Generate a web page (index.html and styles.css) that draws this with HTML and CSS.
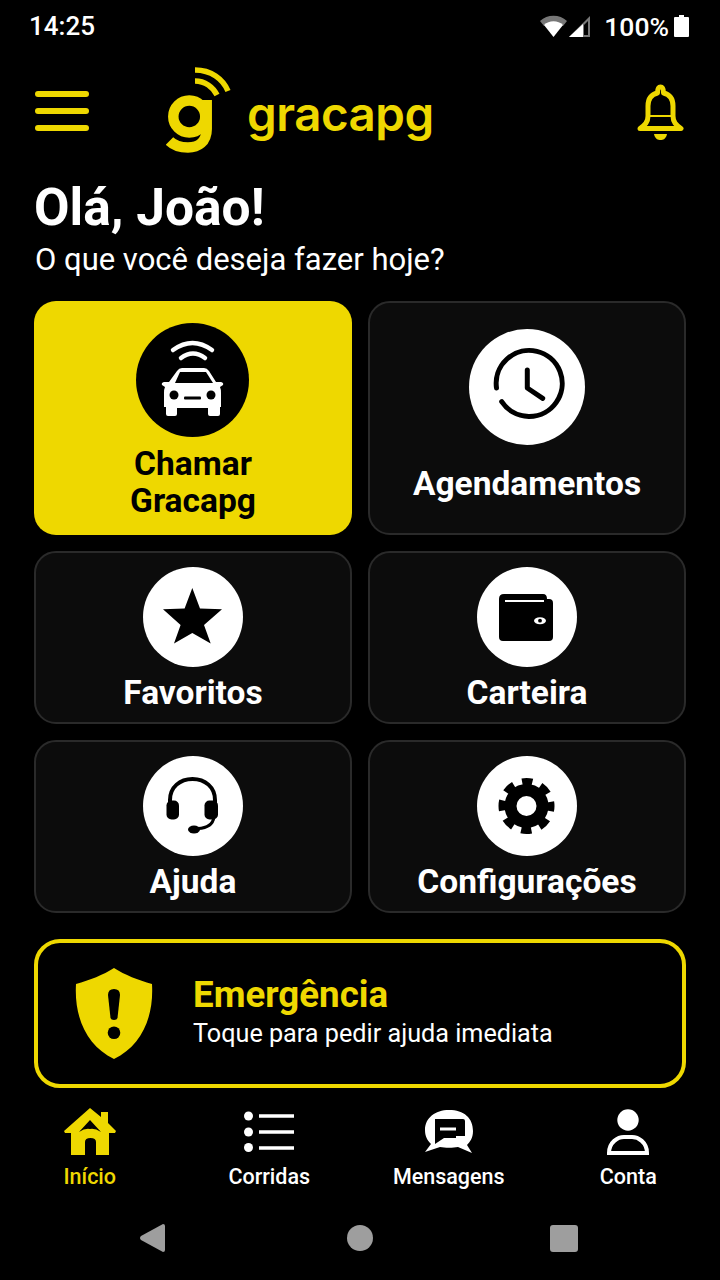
FILE: index.html
```html
<!DOCTYPE html>
<html lang="pt-BR">
<head>
    <meta charset="UTF-8">
    <meta name="viewport" content="width=device-width, initial-scale=1.0">
    <title>Gracapg</title>
    <link rel="stylesheet" href="styles.css">
</head>
<body>
    <div class="statusbar">
        <span class="time">14:25</span>
        <div class="status-icons">
            <svg class="ico-wifi" width="27" height="22" viewBox="0 0 27 22">
                <path class="grey" d="M0 6 A20 20 0 0 1 27 6 L23 11 A14 14 0 0 0 4 11 Z"/>
                <path class="white" d="M4 10 A14 14 0 0 1 23 10 L13.5 22 Z"/>
            </svg>
            <svg class="ico-signal" width="22" height="22" viewBox="0 0 22 22">
                <path class="grey" d="M21 1 V22 H0 Z"/>
                <path class="black" d="M19 6 V20 H15 V10 Z"/>
                <path class="white" d="M14 9 V22 H0 Z"/>
            </svg>
            <span class="pct">100%</span>
            <svg class="ico-batt" width="15" height="22" viewBox="0 0 15 22">
                <path class="white" d="M5 0 H10 V2 H14 Q15 2 15 3 V21 Q15 22 14 22 H1 Q0 22 0 21 V3 Q0 2 1 2 H5 Z"/>
            </svg>
        </div>
    </div>

    <header class="topbar">
        <div class="burger"><span></span><span></span><span></span></div>
        <div class="logo">
            <svg class="logo-mark" width="65" height="87" viewBox="0 0 65 87">
                <circle class="ln-y" cx="23.3" cy="49.5" r="16" stroke-width="10.5"/>
                <path class="ln-y" stroke-width="10.5" d="M40.7 33 V62 C40.7 75 32 80.500 22 80.500 C14 80.500 8 78.500 3.500 74"/>
                <path class="ln-y" stroke-width="5.5" d="M29 3 C45 3 57 12 62 24"/>
                <path class="ln-y" stroke-width="5.5" d="M29 14 C39 14 47 20 51 28"/>
            </svg>
            <span class="logo-text">gracapg</span>
        </div>
        <svg class="bell" width="47" height="56" viewBox="0 0 47 56">
            <path class="ln-y" stroke-width="5" stroke-linejoin="round" d="M23.5 3 C26 3 26.5 5 26.5 9 C33 10.500 36 15 36 22 V32 C36 38 39 41 44 44.500 H3 C8 41 11 38 11 32 V22 C11 15 14 10.500 20.500 9 C20.500 5 21 3 23.5 3 Z"/>
            <path class="ln-y" stroke-width="2" d="M11 32 H36"/>
            <path class="yellow" d="M17 50 H30 C29 55 26 56 23.5 56 C21 56 18 55 17 50 Z"/>
        </svg>
    </header>

    <main class="content">
        <h1 class="title">Olá, João!</h1>
        <p class="subtitle">O que você deseja fazer hoje?</p>

        <div class="grid">
            <div class="card card-main">
                <div class="circle circle-black">
                    <svg width="113" height="113" viewBox="0 0 113 113">
                        <path class="ln-w" stroke-width="4.5" stroke-linecap="round" d="M37 27 Q56.5 13 76 27"/>
                        <path class="ln-w" stroke-width="4.5" stroke-linecap="round" d="M45 35 Q57 26 69 35"/>
                        <path class="white" d="M46 45 H68 Q71 45 73 48 L80 59 H85 Q88 60 87 62 L84 64 Q85 66 85 70 V84 H84 V91 Q84 93 82 93 H74 Q72 93 72 91 V85 H41 V91 Q41 93 39 93 H32 Q30 93 30 91 V84 H28 V70 Q28 66 29 64 L26 62 Q25 60 28 59 H33 L41 48 Q43 45 46 45 Z"/>
                        <path class="black" d="M44 49 H70 L77 60 H39 Z"/>
                        <circle class="black" cx="38" cy="72" r="4.5"/>
                        <circle class="black" cx="75" cy="72" r="4.5"/>
                        <rect class="black" x="48" y="73.5" width="17" height="3" rx="1"/>
                    </svg>
                </div>
                <span class="label">Chamar<br>Gracapg</span>
            </div>

            <div class="card card-tall">
                <div class="circle circle-big">
                    <svg width="116" height="116" viewBox="0 0 116 116">
                        <path class="ln-k" stroke-width="5" stroke-linecap="round" d="M32.7 72.7 A33 33 0 1 0 27.5 59"/>
                        <path class="ln-k" stroke-width="5" stroke-linecap="round" stroke-linejoin="round" d="M58.3 41 V59 L73.7 69.3"/>
                    </svg>
                </div>
                <span class="label">Agendamentos</span>
            </div>

            <div class="card">
                <div class="circle">
                    <svg width="100" height="100" viewBox="0 0 100 100">
                        <path class="black" d="M49.3 21 L57 41.5 L79 42.3 L61 58 L67.7 76.5 L49.3 66 L31 76.5 L37.6 58 L20 42.3 L41.6 41.5 Z"/>
                    </svg>
                </div>
                <span class="label">Favoritos</span>
            </div>

            <div class="card">
                <div class="circle">
                    <svg width="100" height="100" viewBox="0 0 100 100">
                        <path class="black" d="M27 27 H66 Q70 27 70 32 H72 Q76 32 76 36 V70 Q76 74 72 74 H26 Q22 74 22 70 V32 Q22 27 27 27 Z"/>
                        <path class="ln-w" stroke-width="2" d="M28 34 H67"/>
                        <ellipse class="white" cx="63" cy="53.7" rx="6" ry="3.5"/>
                        <circle class="black" cx="63" cy="53.7" r="1.9"/>
                    </svg>
                </div>
                <span class="label">Carteira</span>
            </div>

            <div class="card">
                <div class="circle">
                    <svg width="100" height="100" viewBox="0 0 100 100">
                        <path class="ln-k" stroke-width="4" d="M27 48 V44 C27 31 37 23 49.5 23 C62 23 72 31 72 44 V48"/>
                        <rect class="black" x="23.5" y="44.5" width="12.5" height="19" rx="5"/>
                        <rect class="black" x="61.5" y="44.5" width="13.5" height="19" rx="5"/>
                        <path class="ln-k" stroke-width="3" d="M71 61 C70 68 64 72 55 72.5"/>
                        <ellipse class="black" cx="51" cy="73.5" rx="6" ry="4"/>
                    </svg>
                </div>
                <span class="label">Ajuda</span>
            </div>

            <div class="card">
                <div class="circle">
                    <svg width="100" height="100" viewBox="0 0 100 100">
                        <circle class="ln-k" cx="49.5" cy="50" r="16" stroke-width="12"/>
                        <circle class="ln-k gear-teeth" cx="49.5" cy="50" r="24.5" stroke-width="7"/>
                    </svg>
                </div>
                <span class="label">Configurações</span>
            </div>
        </div>

        <div class="emergency">
            <svg class="shield" width="78" height="91" viewBox="0 0 78 91">
                <path class="yellow" d="M39 0 C50 7 63 12 77 16 C79 50 66 78 39 91 C12 78 -1 50 1 16 C15 12 28 7 39 0 Z"/>
                <path class="black" d="M33 27 Q33 21 39 21 Q45 21 45 27 L42.5 50 Q42 52 39 52 Q36 52 35.5 50 Z"/>
                <circle class="black" cx="39" cy="64.7" r="6.3"/>
            </svg>
            <div class="emergency-text">
                <span class="emergency-title">Emergência</span>
                <span class="emergency-sub">Toque para pedir ajuda imediata</span>
            </div>
        </div>
    </main>

    <nav class="tabs">
        <div class="tab tab-active">
            <svg width="52" height="47" viewBox="0 0 52 47">
                <path class="yellow" d="M26 0 L37 9 V4 H44 V15 L52 23 L51 25 H45 V47 H32 V34 Q32 30 26.500 30 Q21 30 21 34 V47 H7 V25 H1 L0 23 Z"/>
                <path class="black" d="M26 12 L37 24 Q31 20 26 21 Q21 20 15 24 Z"/>
            </svg>
            <span>Início</span>
        </div>
        <div class="tab">
            <svg width="52" height="47" viewBox="0 0 52 47">
                <circle class="white" cx="5.500" cy="8" r="4.500"/>
                <circle class="white" cx="5.500" cy="24" r="4.500"/>
                <circle class="white" cx="5.500" cy="39.500" r="4.500"/>
                <path class="ln-w" stroke-width="3.500" d="M16 8 H51 M16 24 H51 M16 40 H51"/>
            </svg>
            <span>Corridas</span>
        </div>
        <div class="tab">
            <svg width="50" height="47" viewBox="0 0 50 47">
                <path class="white" d="M25 2 C40 2 49 10 49 23 C49 30 46 34 43 37 L48 45 L34 39 C29 40 21 40 16 39 L1 44 L7 36 C3 32 1 28 1 22 C1 10 11 2 25 2 Z"/>
                <path class="black" d="M11 11 H39 Q41 11 41 13 V28 H32 V30 H20 L11 36 Z"/>
                <path class="ln-w" stroke-width="3" d="M16 21 H32"/>
            </svg>
            <span>Mensagens</span>
        </div>
        <div class="tab">
            <svg width="44" height="47" viewBox="0 0 44 47">
                <circle class="white" cx="22" cy="12" r="10.700"/>
                <path class="ln-w" stroke-width="4" d="M3 45 C3 34 12 29 18 29 H26 C32 29 41 34 41 45 Z"/>
            </svg>
            <span>Conta</span>
        </div>
    </nav>

    <div class="sysnav">
        <svg width="25" height="28" viewBox="0 0 25 28">
            <path class="sys" d="M25 2 V26 Q25 28 23 28 L1 16 Q-1 14 1 12 L23 0 Q25 0 25 2 Z"/>
        </svg>
        <div class="sys-circle"></div>
        <div class="sys-square"></div>
    </div>
</body>
</html>
```

FILE: styles.css
```css
body {
    margin: 0;
    width: 720px;
    height: 1280px;
    overflow: hidden;
    background-color: #000;
    color: #fff;
    font-family: Roboto, "Liberation Sans", sans-serif;
}

/* svg colours */
.white { fill: #fff; }
.black { fill: #000; }
.grey { fill: #777; }
.yellow { fill: #eed800; }
.sys { fill: #9e9e9e; }
.ln-y { fill: none; stroke: #eed800; }
.ln-w { fill: none; stroke: #fff; }
.ln-k { fill: none; stroke: #000; }

.gear-teeth {
    stroke-dasharray: 10.5 8.74;
    stroke-dashoffset: 5.25;
}

/* status bar */
.statusbar {
    height: 52px;
    display: flex;
    align-items: center;
    justify-content: space-between;
    padding: 0 31px 0 29px;
    font-size: 26px;
    font-weight: 500;
}

.status-icons {
    display: flex;
    align-items: center;
}

.ico-signal {
    margin-left: 2px;
}

.pct {
    margin-left: 13px;
    margin-right: 5px;
    font-size: 26.5px;
}

/* top bar */
.topbar {
    height: 116px;
    display: flex;
    align-items: center;
    padding: 0 36px 0 35px;
}

.burger {
    width: 54px;
    margin-top: 2px;
    display: flex;
    flex-direction: column;
    gap: 11px;
}

.burger span {
    height: 6px;
    border-radius: 3px;
    background-color: #eed800;
}

.logo {
    display: flex;
    align-items: center;
    margin-left: 77px;
}

.logo-text {
    margin-left: 16px;
    margin-top: 6px;
    font-family: Inter, Roboto, sans-serif;
    font-size: 47.5px;
    font-weight: 600;
    letter-spacing: -0.5px;
    color: #eed800;
}

.bell {
    margin-left: auto;
    margin-top: 4px;
}

/* main */
.content {
    padding: 0 34px;
}

.title {
    margin: 11px 0 0;
    font-size: 51.5px;
    line-height: 58px;
    font-weight: 700;
}

.subtitle {
    margin: 1px 0 0;
    padding-left: 1px;
    font-size: 31px;
    line-height: 44px;
}

.grid {
    margin-top: 19px;
    display: grid;
    grid-template-columns: 318px 318px;
    grid-template-rows: 234px 173px 173px;
    gap: 16px;
}

.card {
    box-sizing: border-box;
    display: flex;
    flex-direction: column;
    align-items: center;
    padding-top: 14px;
    background-color: #0c0c0c;
    border: 2px solid #2a2a2a;
    border-radius: 22px;
}

.card-main {
    padding-top: 22px;
    background-color: #eed800;
    border: 0;
    color: #000;
}

.card-tall {
    padding-top: 26px;
}

.circle {
    width: 100px;
    height: 100px;
    flex: none;
    border-radius: 50%;
    background-color: #fff;
}

.circle svg {
    display: block;
}

.circle-black {
    width: 113px;
    height: 114px;
    margin-right: 1px;
    background-color: #000;
}

.circle-big {
    width: 116px;
    height: 116px;
}

.label {
    margin-top: 7px;
    font-size: 33.5px;
    line-height: 37px;
    font-weight: 700;
    text-align: center;
}

.card-main .label {
    margin-top: 8px;
}

.card-tall .label {
    margin-top: 20px;
}

/* emergency */
.emergency {
    box-sizing: border-box;
    height: 149px;
    margin-top: 26px;
    display: flex;
    align-items: center;
    gap: 40px;
    padding-left: 37px;
    border: 4px solid #eed800;
    border-radius: 26px;
}

.emergency-text {
    display: flex;
    flex-direction: column;
    padding-bottom: 2px;
}

.emergency-title {
    font-size: 36.7px;
    line-height: 42px;
    font-weight: 700;
    color: #eed800;
}

.emergency-sub {
    font-size: 25.2px;
    line-height: 36px;
}

/* bottom tabs */
.tabs {
    box-sizing: border-box;
    width: 718px;
    height: 112px;
    padding-top: 20px;
    display: grid;
    grid-template-columns: repeat(4, 1fr);
}

.tab {
    display: flex;
    flex-direction: column;
    align-items: center;
    font-size: 21.5px;
    line-height: 26px;
    font-weight: 500;
}

.tab span {
    margin-top: 9px;
}

.tab-active {
    color: #eed800;
}

/* android nav */
.sysnav {
    height: 80px;
    display: flex;
    align-items: center;
    justify-content: center;
    gap: 177px;
    padding: 0 2px 4px 0;
    box-sizing: border-box;
}

.sys-circle {
    width: 26px;
    height: 26px;
    margin-left: 5px;
    border-radius: 50%;
    background-color: #9e9e9e;
}

.sys-square {
    width: 28px;
    height: 27px;
    border-radius: 3px;
    background-color: #9e9e9e;
}
```
